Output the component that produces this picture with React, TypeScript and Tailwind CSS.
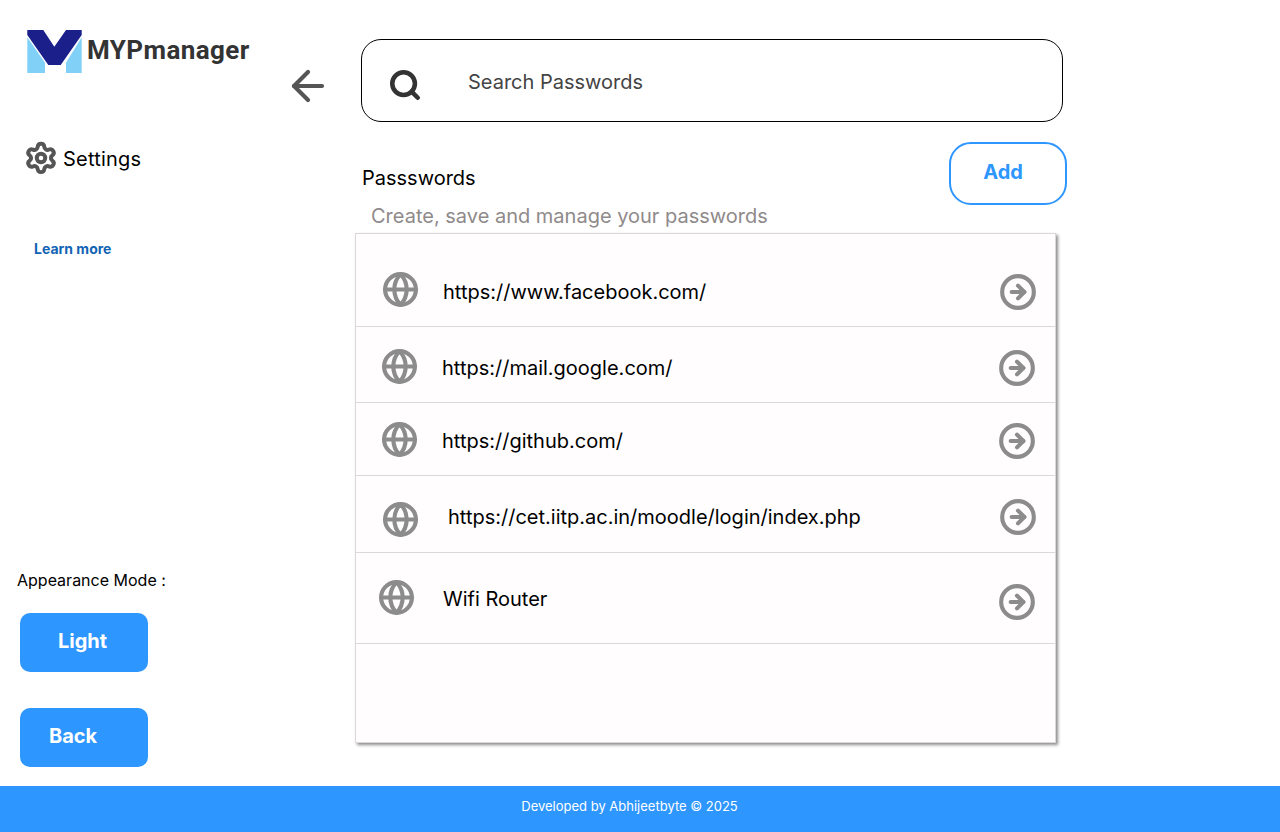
import { ArrowLeft, CircleArrowRight, Globe, Search, Settings } from "lucide-react";

const rows = [
  { label: "https://www.facebook.com/", row: "h-[93px]", globe: "ml-[26px] mt-[37px]", text: "ml-[24px] mt-[46px]", arrow: "mr-[18px] mt-[39px]" },
  { label: "https://mail.google.com/", row: "h-[76px]", globe: "ml-[25px] mt-[21px]", text: "ml-[24px] mt-[29px]", arrow: "mr-[19px] mt-[22px]" },
  { label: "https://github.com/", row: "h-[73px]", globe: "ml-[25px] mt-[18px]", text: "ml-[24px] mt-[26px]", arrow: "mr-[19px] mt-[19px]" },
  { label: "https://cet.iitp.ac.in/moodle/login/index.php", row: "h-[77px]", globe: "ml-[26px] mt-[25px]", text: "ml-[29px] mt-[29px]", arrow: "mr-[18px] mt-[22px]" },
  { label: "Wifi Router", row: "h-[91px]", globe: "ml-[22px] mt-[26px]", text: "ml-[28px] mt-[34px]", arrow: "mr-[19px] mt-[30px]" },
];

function Logo() {
  return (
    <div className="ml-[27px] flex h-[44px] items-start">
      <svg width="55" height="44" viewBox="0 0 55 44" className="shrink-0">
        <polygon points="0.3,7.3 18,32.7 18,43 0.3,43" fill="#81d0f7" />
        <polygon points="54.7,7.3 39,32.7 39,43 54.7,43" fill="#81d0f7" />
        <polygon points="0.3,0 16.3,0 27.3,16.7 39,0 54.7,0 54.7,5 33.7,35 21.3,35 0.3,5" fill="#1b1f8a" />
      </svg>
      <span className="ml-[5px] mt-[2px] font-['Roboto',sans-serif] text-[26px] leading-[36px] font-bold tracking-[0.4px] text-[#333333]">
        MYPmanager
      </span>
    </div>
  );
}

export default function App() {
  return (
    <div className="flex h-[832px] flex-col overflow-hidden bg-white font-['Inter',sans-serif] text-black">
      <div className="flex h-[786px]">
        <aside className="flex w-[285px] shrink-0 flex-col pt-[30px]">
          <Logo />
          <div className="ml-[24px] mt-[66px] flex h-[36px] items-center">
            <Settings size={34} strokeWidth={2.8} className="text-[#555555]" />
            <span className="ml-[5px] mt-[2px] text-[20px] leading-[24px] tracking-[0.2px]">Settings</span>
          </div>
          <a className="ml-[34px] mt-[63px] text-[14px] leading-[20px] font-bold text-[#1163b3]">Learn more</a>
          <p className="ml-[17px] mt-[311px] text-[16px] leading-[20px]">Appearance Mode :</p>
          <button className="ml-[20px] mt-[23px] h-[59px] w-[128px] rounded-[10px] bg-[#2e96ff] pb-[4px] pr-[3px] text-center text-[20px] font-bold text-white">
            Light
          </button>
          <button className="ml-[20px] mt-[36px] h-[59px] w-[128px] rounded-[10px] bg-[#2e96ff] pb-[3px] pl-[29px] text-left text-[20px] font-bold text-white">
            Back
          </button>
        </aside>

        <div className="w-[70px] shrink-0 pt-[62px]">
          <ArrowLeft size={48} strokeWidth={2.1} className="-ml-[1px] text-[#555555]" />
        </div>

        <main className="flex w-[712px] shrink-0 flex-col pt-[39px]">
          <div className="ml-[6px] flex h-[83px] w-[702px] items-center rounded-[20px] border border-black">
            <Search size={34} strokeWidth={3.2} className="ml-[26px] mt-[9px] text-[#333333]" />
            <span className="ml-[46px] mt-[2px] text-[20px] leading-[24px] text-[#444444]">Search Passwords</span>
          </div>

          <div className="mt-[20px] flex h-[63px] items-start">
            <span className="ml-[7px] mt-[24px] text-[20px] leading-[24px]">Passswords</span>
            <button className="ml-auto h-[63px] w-[118px] rounded-[22px] border-2 border-[#2e96ff] pb-[3px] pr-[10px] text-[20px] font-bold text-[#2e96ff]">
              Add
            </button>
          </div>

          <p className="ml-[16px] mt-[-1px] text-[20px] leading-[24px] text-[#8f8a8a]">
            Create, save and manage your passwords
          </p>

          <section className="mt-[5px] h-[510px] w-[701px] border border-[#d9d9d9] bg-[#fffdfe] shadow-[2px_2px_3px_rgba(0,0,0,0.45)]">
            {rows.map((r) => (
              <div key={r.label} className={`flex items-start border-b border-[#d9d9d9] ${r.row}`}>
                <Globe size={37} strokeWidth={2.7} className={`shrink-0 text-[#8c8c8c] ${r.globe}`} />
                <span className={`text-[20px] leading-[24px] ${r.text}`}>{r.label}</span>
                <CircleArrowRight size={38} strokeWidth={2.6} className={`ml-auto shrink-0 text-[#8c8c8c] ${r.arrow}`} />
              </div>
            ))}
          </section>
        </main>
      </div>

      <footer className="flex h-[46px] justify-center bg-[#2e96ff] pr-[21px] pt-[11px] text-[13px] leading-[18px] text-white">
        Developed by Abhijeetbyte © 2025
      </footer>
    </div>
  );
}
